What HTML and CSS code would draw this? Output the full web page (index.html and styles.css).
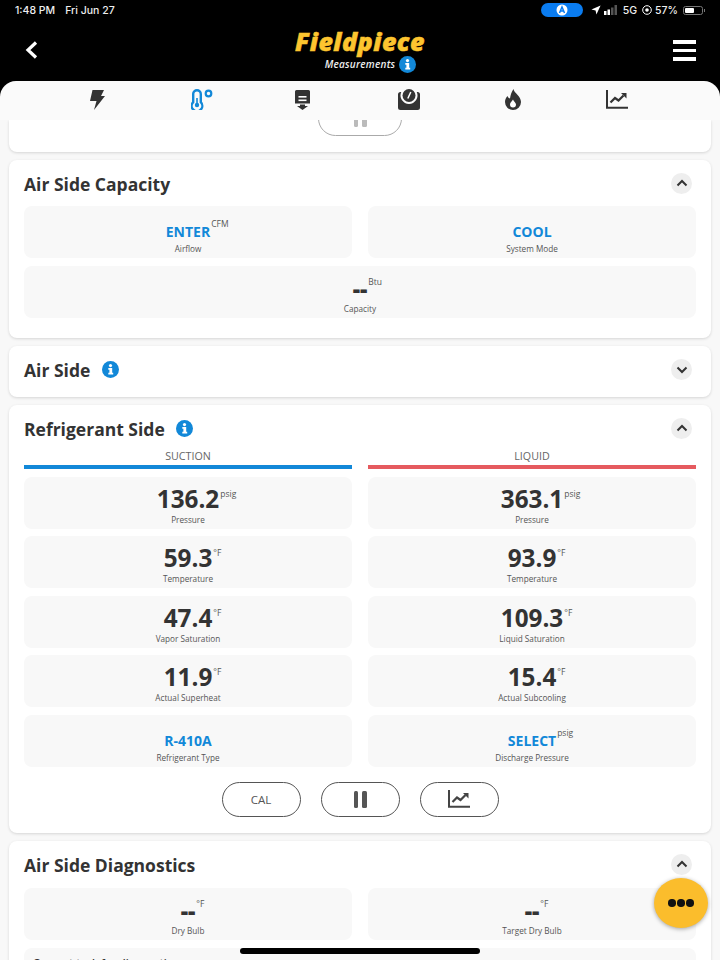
FILE: index.html
```html
<!DOCTYPE html>
<html>

<head>
  <meta charset="UTF-8">
  <title>Measurements</title>
  <link rel="stylesheet" href="styles.css">
</head>

<body>
  <div class="screen">
    <div class="status">
      <div class="status-left"><span>1:48 PM</span><span>Fri Jun 27</span></div>
      <div class="status-right">
        <span class="pill-a"><svg width="12" height="12" viewBox="0 0 12 12"><circle cx="6" cy="6" r="5.500" fill="#fff"/><path d="M3.500 9 6 3l2.500 6M4.500 7h3" fill="none" stroke="#0a7cf0" stroke-width="1.500"/></svg></span>
        <svg class="st-arrow" width="10" height="10" viewBox="0 0 12 12"><path d="M11.500.5 .5 5.500l5 1 1 5z" fill="#fff"/></svg>
        <svg class="st-signal" width="14" height="10" viewBox="0 0 14 10"><rect x="0" y="6" width="2.500" height="4" fill="#fff"/><rect x="3.500" y="4.500" width="2.500" height="5.500" fill="#fff"/><rect x="7" y="2.500" width="2.500" height="7.500" fill="#555"/><rect x="10.500" y="0" width="2.500" height="10" fill="#555"/></svg>
        <span>5G</span>
        <svg class="st-ring" width="10" height="10" viewBox="0 0 10 10"><circle cx="5" cy="5" r="4.300" fill="none" stroke="#fff" stroke-width="1"/><circle cx="5" cy="5" r="1.800" fill="#fff"/></svg>
        <span class="st-pct">57%</span>
        <span class="battery"><span class="battery-fill"></span></span>
      </div>
    </div>

    <div class="header">
      <svg class="back" width="14" height="20" viewBox="0 0 14 20"><path d="M11 2.500 3 10l8 7.500" fill="none" stroke="#fff" stroke-width="3.200"/></svg>
      <div class="brand">
        <div class="logo">Fieldpiece</div>
        <div class="subtitle">Measurements <svg class="info-icon" width="17" height="17" viewBox="0 0 17 17"><circle cx="8.500" cy="8.500" r="8.500" fill="#1288d8"/><circle cx="8.500" cy="4.600" r="1.600" fill="#fff"/><path d="M6.300 7h3.900v4.800h1v1.800H6.300v-1.800h1.100V8.800H6.300z" fill="#fff"/></svg></div>
      </div>
      <div class="burger"><span></span><span></span><span></span></div>
    </div>

    <div class="tabs">
      <svg width="15" height="20" viewBox="0 0 15 20"><path d="M2.500 0H14l-3 6h4L4 20l2.500-9H0z" fill="#333"/></svg>
      <svg width="22" height="21" viewBox="0 0 22 21"><path d="M6 1.200a3.800 3.800 0 0 1 3.800 3.800v8.200a5.300 5.300 0 1 1-7.600 0V5A3.800 3.800 0 0 1 6 1.200z" fill="none" stroke="#1288d8" stroke-width="2.400"/><circle cx="6" cy="16" r="2.200" fill="#1288d8"/><rect x="5.200" y="9" width="1.600" height="6" fill="#1288d8"/><circle cx="17.500" cy="4.500" r="2.800" fill="none" stroke="#1288d8" stroke-width="2.200"/></svg>
      <svg class="tab-third" width="15" height="20" viewBox="0 0 15 20"><path d="M1.500 0h12A1.500 1.500 0 0 1 15 1.500v12H0v-12A1.500 1.500 0 0 1 1.500 0z" fill="#333"/><rect x="3.500" y="6" width="8" height="1.600" fill="#fff"/><rect x="3.500" y="9.500" width="8" height="1.600" fill="#fff"/><path d="M5 14.500h5V16h3l-5.500 4L2 16h3z" fill="#333"/></svg>
      <svg width="22" height="21" viewBox="0 0 22 21"><path d="M2.500 3H3.250A8.500 8.500 0 1 0 18.750 3H19.500A2.500 2.500 0 0 1 22 5.500V18.500a2.500 2.500 0 0 1-2.500 2.500H2.500A2.500 2.500 0 0 1 0 18.500V5.500A2.500 2.500 0 0 1 2.500 3z" fill="#333"/><circle cx="11" cy="6.500" r="6.500" fill="#333"/><path d="M9.800 9.500 12.800 3" stroke="#fff" stroke-width="1.500"/></svg>
      <svg width="16" height="21" viewBox="0 0 16 21"><path d="M8.500 0c.5 4 7.500 7 7.500 13a8 8 0 0 1-16 0c0-2.500 1-4.500 2.500-6C3 8.500 4 9.500 5 9.500 5.500 6 6.500 3 8.500 0z" fill="#333"/><path d="M8 10.500c.5 2 3 3 3 5a3 3 0 0 1-6 0c0-2 2-3.300 3-5z" fill="#fff"/></svg>
      <svg width="22" height="19" viewBox="0 0 22 19"><path d="M1 0v17.800h21" fill="none" stroke="#333" stroke-width="2"/><path d="M4.500 12.500 9 8l3.500 2.500 5-5" fill="none" stroke="#333" stroke-width="2.200"/><path d="M15 3h5.500v5.500z" fill="#333"/></svg>
    </div>

    <div class="scroller">
      <div class="card card-stub">
        <div class="actions actions-stub">
          <button class="round-btn"><span class="pause"><i></i><i></i></span></button>
        </div>
      </div>

      <div class="card">
        <div class="card-head">
          <h2>Air Side Capacity</h2>
          <span class="chev"><svg width="12" height="8" viewBox="0 0 12 8"><path d="M1.500 6.500 6 2l4.500 4.500" fill="none" stroke="#333" stroke-width="2"/></svg></span>
        </div>
        <div class="grid">
          <div class="tile"><div class="val link">ENTER<sup>CFM</sup></div><div class="lbl">Airflow</div></div>
          <div class="tile"><div class="val link">COOL</div><div class="lbl">System Mode</div></div>
          <div class="tile wide"><div class="val dash">--<sup>Btu</sup></div><div class="lbl">Capacity</div></div>
        </div>
      </div>

      <div class="card card-closed">
        <div class="card-head">
          <h2>Air Side <svg class="info-icon info-title" width="17" height="17" viewBox="0 0 17 17"><circle cx="8.500" cy="8.500" r="8.500" fill="#1288d8"/><circle cx="8.500" cy="4.600" r="1.600" fill="#fff"/><path d="M6.300 7h3.900v4.800h1v1.800H6.300v-1.800h1.100V8.800H6.300z" fill="#fff"/></svg></h2>
          <span class="chev"><svg width="12" height="8" viewBox="0 0 12 8"><path d="M1.500 1.500 6 6l4.500-4.500" fill="none" stroke="#333" stroke-width="2"/></svg></span>
        </div>
      </div>

      <div class="card card-refrigerant">
        <div class="card-head head-tight">
          <h2>Refrigerant Side <svg class="info-icon info-title" width="17" height="17" viewBox="0 0 17 17"><circle cx="8.500" cy="8.500" r="8.500" fill="#1288d8"/><circle cx="8.500" cy="4.600" r="1.600" fill="#fff"/><path d="M6.300 7h3.900v4.800h1v1.800H6.300v-1.800h1.100V8.800H6.300z" fill="#fff"/></svg></h2>
          <span class="chev"><svg width="12" height="8" viewBox="0 0 12 8"><path d="M1.500 6.500 6 2l4.500 4.500" fill="none" stroke="#333" stroke-width="2"/></svg></span>
        </div>
        <div class="grid">
          <div class="col-head suction">SUCTION</div>
          <div class="col-head liquid">LIQUID</div>
          <div class="tile"><div class="val big">136.2<sup>psig</sup></div><div class="lbl">Pressure</div></div>
          <div class="tile"><div class="val big">363.1<sup>psig</sup></div><div class="lbl">Pressure</div></div>
          <div class="tile"><div class="val big">59.3<sup>°F</sup></div><div class="lbl">Temperature</div></div>
          <div class="tile"><div class="val big">93.9<sup>°F</sup></div><div class="lbl">Temperature</div></div>
          <div class="tile"><div class="val big">47.4<sup>°F</sup></div><div class="lbl">Vapor Saturation</div></div>
          <div class="tile"><div class="val big">109.3<sup>°F</sup></div><div class="lbl">Liquid Saturation</div></div>
          <div class="tile"><div class="val big">11.9<sup>°F</sup></div><div class="lbl">Actual Superheat</div></div>
          <div class="tile"><div class="val big">15.4<sup>°F</sup></div><div class="lbl">Actual Subcooling</div></div>
          <div class="tile"><div class="val link">R-410A</div><div class="lbl">Refrigerant Type</div></div>
          <div class="tile"><div class="val link">SELECT<sup>psig</sup></div><div class="lbl">Discharge Pressure</div></div>
        </div>
        <div class="actions">
          <button class="round-btn">CAL</button>
          <button class="round-btn"><span class="pause"><i></i><i></i></span></button>
          <button class="round-btn"><svg width="22" height="18" viewBox="0 0 22 18"><path d="M1 0v16.800h21" fill="none" stroke="#444" stroke-width="2"/><path d="M4.500 12 9 7.500l3.500 2.500 5-5" fill="none" stroke="#444" stroke-width="2.200"/><path d="M15 3h5.500v5.500z" fill="#444"/></svg></button>
        </div>
      </div>

      <div class="card">
        <div class="card-head head-last">
          <h2>Air Side Diagnostics</h2>
          <span class="chev"><svg width="12" height="8" viewBox="0 0 12 8"><path d="M1.500 6.500 6 2l4.500 4.500" fill="none" stroke="#333" stroke-width="2"/></svg></span>
        </div>
        <div class="grid">
          <div class="tile"><div class="val dash">--<sup>°F</sup></div><div class="lbl">Dry Bulb</div></div>
          <div class="tile"><div class="val dash">--<sup>°F</sup></div><div class="lbl">Target Dry Bulb</div></div>
          <div class="tile wide note">Current task for diagnostics</div>
        </div>
      </div>
    </div>

    <div class="fab"><i></i><i></i><i></i></div>
    <div class="home-bar"></div>
  </div>
</body>

</html>
```

FILE: styles.css
```css
* {
  box-sizing: border-box;
}

html,
body {
  margin: 0;
  padding: 0;
}

body {
  font-family: "Open Sans", "Liberation Sans", sans-serif;
  color: #333;
}

.screen {
  position: relative;
  width: 720px;
  height: 960px;
  overflow: hidden;
  background: #000;
  display: flex;
  flex-direction: column;
}

.status {
  height: 20px;
  flex: none;
  display: flex;
  justify-content: space-between;
  align-items: center;
  padding: 0 17px 0 15px;
  color: #eee;
  font-family: Inter, "Liberation Sans", sans-serif;
  font-size: 10.500px;
  font-weight: 500;
}

.status-left {
  display: flex;
  gap: 10px;
}

.status-right {
  display: flex;
  align-items: center;
  gap: 5px;
}

.pill-a {
  width: 42px;
  height: 14px;
  margin-right: 3px;
  border-radius: 7px;
  background: #0a7cf0;
  display: flex;
  align-items: center;
  justify-content: center;
}

.st-signal {
  margin-left: -2px;
}

.st-pct {
  margin-left: -2px;
}

.battery {
  position: relative;
  width: 20px;
  height: 9px;
  padding: 1px;
  border: 1px solid #777;
  border-radius: 2.500px;
}

.battery::after {
  content: "";
  position: absolute;
  right: -3px;
  top: 2px;
  width: 1.500px;
  height: 3px;
  background: #777;
}

.battery-fill {
  display: block;
  width: 57%;
  height: 100%;
  border-radius: 1px;
  background: #fff;
}

.header {
  height: 61px;
  flex: none;
  display: flex;
  align-items: center;
  justify-content: space-between;
  padding: 0 24px 0 25px;
}

.back {
  margin-top: -1px;
}

.brand {
  display: flex;
  flex-direction: column;
  align-items: center;
  margin-left: 8px;
}

.logo {
  font-size: 25px;
  line-height: 28px;
  font-weight: 800;
  font-style: italic;
  letter-spacing: .5px;
  color: #fdc52f;
  -webkit-text-stroke: .5px #fdc52f;
  margin-top: -1px;
}

.subtitle {
  display: flex;
  align-items: center;
  gap: 4px;
  padding-left: 21px;
  font-size: 10px;
  letter-spacing: .25px;
  line-height: 18px;
  font-style: italic;
  font-weight: 600;
  color: #eee;
}

.burger {
  width: 23px;
  display: flex;
  flex-direction: column;
  gap: 5px;
}

.burger span {
  height: 3.500px;
  background: #fff;
}

.info-icon {
  flex: none;
}

.info-title {
  margin-left: 7px;
  vertical-align: -1px;
}

.tabs {
  height: 39px;
  flex: none;
  display: grid;
  grid-template-columns: repeat(6, 103.800px);
  justify-items: center;
  align-items: center;
  padding: 0 0 2px 46px;
  background: #fafafa;
  border-radius: 16px 16px 0 0;
}

.tab-third {
  margin-right: 5px;
}

.scroller {
  flex: 1;
  min-height: 0;
  overflow: hidden;
  background: #f8f8f8;
  padding: 0 9px;
  display: flex;
  flex-direction: column;
  gap: 8px;
}

.card {
  flex: none;
  background: #fff;
  border-radius: 8px;
  box-shadow: 0 1px 3px rgba(0, 0, 0, .14);
  padding: 0 15px 20.500px;
}

.card-refrigerant {
  padding-bottom: 16.500px;
}

.card-stub {
  height: 32px;
  overflow: hidden;
  border-radius: 0 0 8px 8px;
  padding: 0 15px;
}

.card-closed {
  height: 51px;
  padding-bottom: 0;
}

.card-head {
  height: 46px;
  display: flex;
  justify-content: space-between;
  align-items: center;
}

.card-closed .card-head {
  height: 47px;
}

.head-tight {
  margin-bottom: -5px;
}

.head-last {
  margin-bottom: 1px;
}

.card-head h2 {
  margin: 0;
  padding-top: 1px;
  font-size: 17.500px;
  line-height: 24px;
  font-weight: 700;
  color: #333;
}

.chev {
  width: 21px;
  height: 21px;
  margin-right: 4px;
  border-radius: 50%;
  background: #eee;
  display: flex;
  align-items: center;
  justify-content: center;
}

.grid {
  display: grid;
  grid-template-columns: 1fr 1fr;
  gap: 7.500px 16px;
}

.wide {
  grid-column: span 2;
}

.tile {
  height: 52px;
  border-radius: 8px;
  background: #f8f8f8;
  display: flex;
  flex-direction: column;
  align-items: center;
  justify-content: flex-end;
  padding-bottom: 3px;
  text-align: center;
}

.val {
  position: relative;
  font-weight: 700;
  color: #333;
}

.val sup {
  position: absolute;
  left: 100%;
  font-size: 8.500px;
  line-height: 10px;
  font-weight: 400;
  color: #555;
}

.link {
  font-size: 14px;
  line-height: 18px;
  color: #1288d8;
  margin-bottom: 2px;
}

.link sup {
  top: -4px;
  margin-left: 1px;
}

.dash {
  font-size: 23px;
  line-height: 18px;
  font-weight: 800;
  margin-bottom: 6px;
}

.dash sup {
  top: -2px;
  margin-left: 1px;
}

.big {
  font-size: 24.300px;
  line-height: 30px;
}

.big sup {
  top: 5px;
  margin-left: 1px;
}

.lbl {
  font-size: 8.200px;
  line-height: 12px;
  color: #555;
}

.col-head {
  height: 23px;
  font-size: 10.700px;
  line-height: 21px;
  color: #666;
  text-align: center;
  border-bottom: 4px solid;
}

.suction {
  border-color: #1288d8;
}

.liquid {
  border-color: #e55a5f;
}

.actions {
  display: flex;
  justify-content: center;
  gap: 20px;
  margin-top: 15px;
}

.actions-stub {
  margin-top: -19px;
}

.round-btn {
  width: 79px;
  height: 35px;
  padding: 0;
  display: flex;
  align-items: center;
  justify-content: center;
  background: #fff;
  border: 1.500px solid #555;
  border-radius: 18px;
  font-family: inherit;
  font-size: 11.500px;
  color: #555;
}

.pause {
  display: flex;
  gap: 4px;
}

.pause i {
  width: 4.500px;
  height: 17px;
  border-radius: 1.500px;
  background: #555;
}

.card-stub .round-btn {
  width: 84px;
  border-color: #aaa;
}

.card-stub .pause i {
  background: #bbb;
}

.note {
  align-items: flex-start;
  justify-content: flex-start;
  padding: 7px 9px;
  font-size: 10.800px;
  font-weight: 600;
}

.fab {
  position: absolute;
  left: 654px;
  top: 878px;
  width: 54px;
  height: 50px;
  border-radius: 50%;
  background: #fbbd2c;
  box-shadow: 0 1px 4px rgba(0, 0, 0, .35);
  display: flex;
  align-items: center;
  justify-content: center;
  gap: 1.500px;
}

.fab i {
  width: 7.500px;
  height: 7.500px;
  border-radius: 50%;
  background: #111;
}

.home-bar {
  position: absolute;
  left: 240px;
  top: 948px;
  width: 240px;
  height: 6px;
  border-radius: 3px;
  background: #000;
}
```
